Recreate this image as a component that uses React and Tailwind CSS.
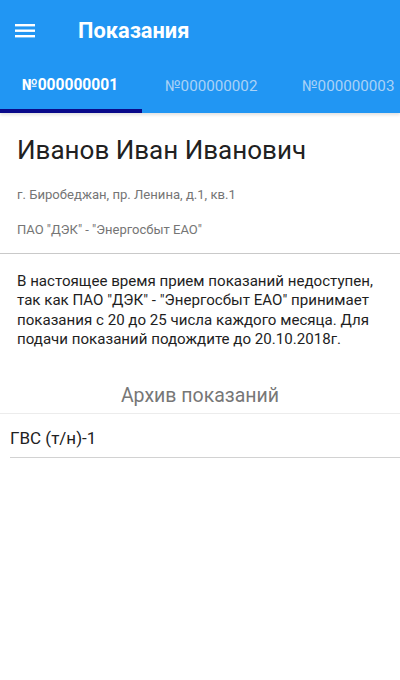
import React from "react";

const tabs = ["№000000001", "№000000002", "№000000003"];

function MenuIcon() {
  return (
    <svg width="22" height="22" viewBox="0 0 22 22" className="block">
      <rect x="1" y="4" width="20" height="2.4" fill="#ffffff" />
      <rect x="1" y="9.5" width="20" height="2.4" fill="#ffffff" />
      <rect x="1" y="15" width="20" height="2.4" fill="#ffffff" />
    </svg>
  );
}

export default function App() {
  return (
    <div
      className="w-[400px] h-[680px] bg-white overflow-hidden"
      style={{ fontFamily: "Roboto, 'Noto Sans', sans-serif" }}
    >
      {/* App bar with tabs */}
      <header className="bg-[#2196f3] shadow-[0_2px_3px_rgba(0,0,0,0.12)]">
        <div className="h-[62px] flex items-center">
          <div className="w-[78px] pl-[14px]">
            <MenuIcon />
          </div>
          <h1 className="text-white text-[21.8px] font-bold leading-none">Показания</h1>
        </div>
        <nav className="h-[51px] flex">
          {tabs.map((t, i) => (
            <div
              key={t}
              className={
                i === 0
                  ? "w-[142px] flex flex-col"
                  : i === 1
                  ? "w-[138px] flex flex-col"
                  : "w-[120px] flex flex-col"
              }
            >
              <div
                className={
                  i === 0
                    ? "flex-1 flex items-center justify-center text-white text-[15.6px] font-bold pt-[1px] pr-[2px]"
                    : i === 1
                    ? "flex-1 flex items-center pl-[23px] text-[#a9d2f7] text-[15.2px] pt-[1px]"
                    : "flex-1 flex items-center pl-[22px] text-[#a9d2f7] text-[15.2px] pt-[1px] whitespace-nowrap"
                }
              >
                {t}
              </div>
              <div className={i === 0 ? "h-[4px] bg-[#0a0a8a]" : "h-[4px]"} />
            </div>
          ))}
        </nav>
      </header>

      {/* Account holder */}
      <section className="px-[17px] pt-[22px] pb-[15px]">
        <div className="text-[26px] leading-[30px] text-[#212121]">Иванов Иван Иванович</div>
        <div className="mt-[22px] text-[13.1px] leading-[16px] text-[#757575]">
          г. Биробеджан, пр. Ленина, д.1, кв.1
        </div>
        <div className="mt-[19px] text-[13px] leading-[16px] text-[#757575]">
          ПАО "ДЭК" - "Энергосбыт ЕАО"
        </div>
      </section>
      <div className="h-px bg-[#c9c9c9]" />

      {/* Notice */}
      <p className="px-[17px] pt-[18px] text-[15.1px] leading-[19.4px] text-[#1e1e1e]">
        В настоящее время прием показаний недоступен, так как ПАО "ДЭК" - "Энергосбыт ЕАО" принимает
        показания с 20 до 25 числа каждого месяца. Для подачи показаний подождите до 20.10.2018г.
      </p>

      {/* Archive */}
      <div className="mt-[29px] h-[34px] flex items-center justify-center text-[19.5px] text-[#777777]">
        Архив показаний
      </div>
      <div className="h-px bg-[#ececec]" />
      <div className="h-[43px] flex items-center pl-[10px] pt-[8px] text-[17px] text-[#212121]">ГВС (т/н)-1</div>
      <div className="ml-[10px] h-px bg-[#d2d2d2]" />
    </div>
  );
}
